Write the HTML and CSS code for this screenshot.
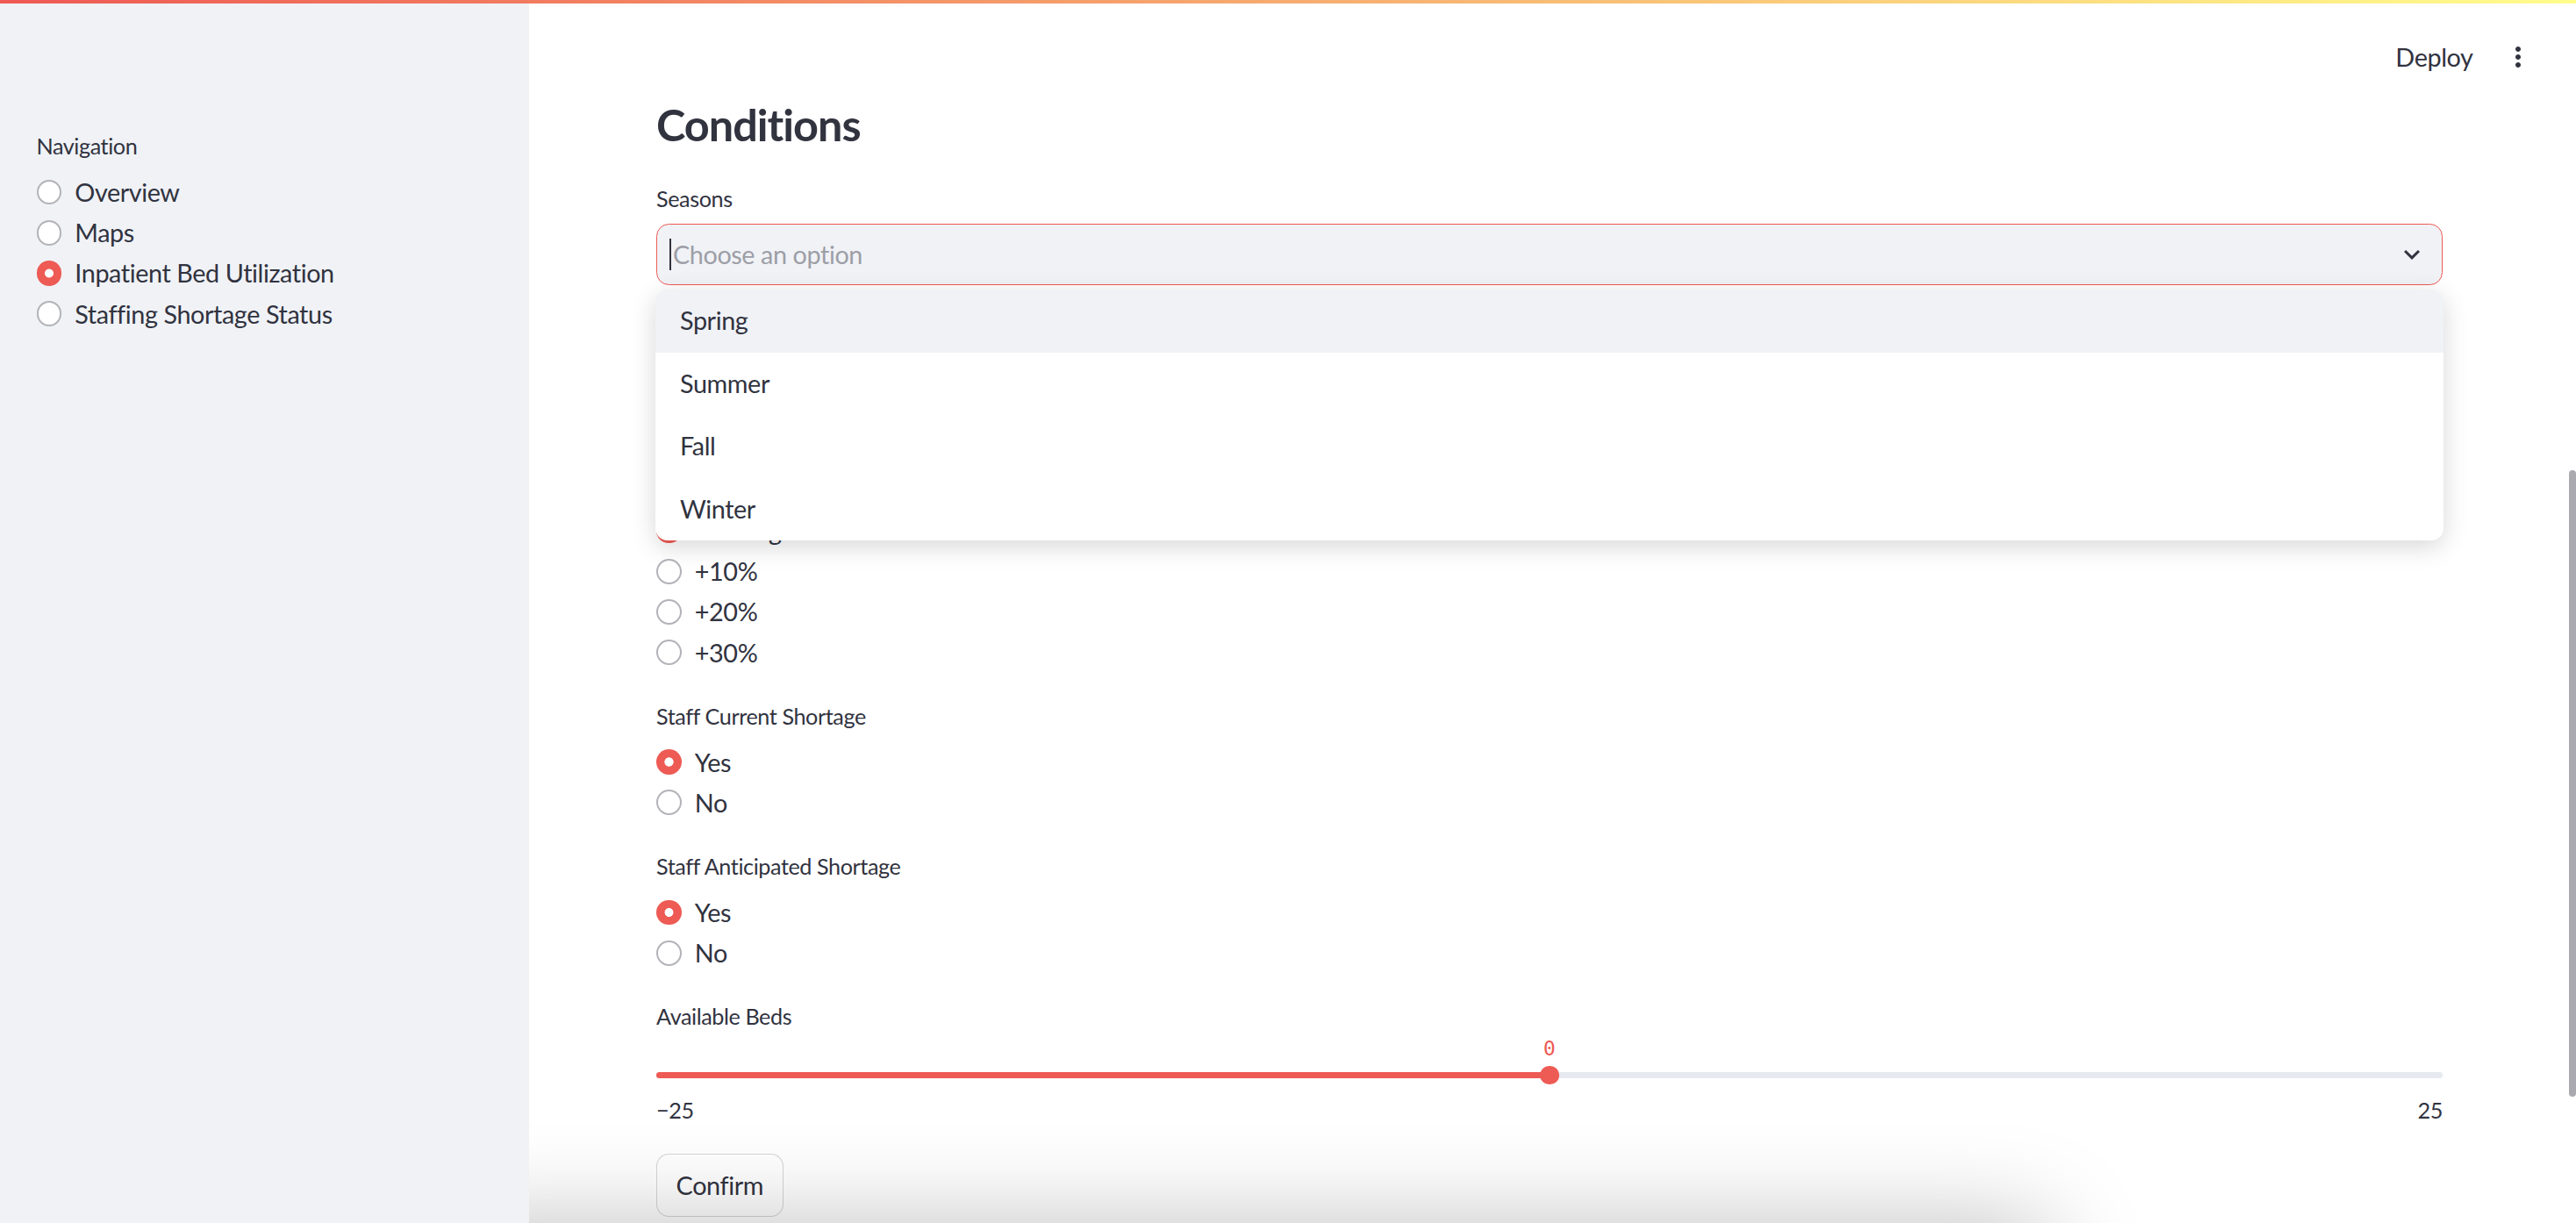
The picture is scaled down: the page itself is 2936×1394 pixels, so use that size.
FILE: index.html
```html
<!DOCTYPE html>
<html lang="en">
<head>
<meta charset="utf-8">
<title>Inpatient Bed Utilization</title>
<link rel="stylesheet" href="styles.css">
</head>
<body>
<div class="decoration"></div>
<div class="app">
  <aside class="sidebar">
    <div class="widget">
      <div class="widget-label">Navigation</div>
      <div class="radio-group">
        <div class="radio-option"><span class="radio"></span><span>Overview</span></div>
        <div class="radio-option"><span class="radio"></span><span>Maps</span></div>
        <div class="radio-option"><span class="radio checked"></span><span>Inpatient Bed Utilization</span></div>
        <div class="radio-option"><span class="radio"></span><span>Staffing Shortage Status</span></div>
      </div>
    </div>
  </aside>

  <main class="main">
    <header class="toolbar">
      <button class="deploy">Deploy</button>
      <button class="menu-btn" aria-label="Main menu">
        <svg viewBox="0 0 24 24" width="36" height="36"><path fill="#31333f" d="M12 8c1.1 0 2-.9 2-2s-.9-2-2-2-2 .9-2 2 .9 2 2 2zm0 2c-1.1 0-2 .9-2 2s.9 2 2 2 2-.9 2-2-.9-2-2-2zm0 6c-1.1 0-2 .9-2 2s.9 2 2 2 2-.9 2-2-.9-2-2-2z"/></svg>
      </button>
    </header>

    <section class="block">
      <h3 class="subheader">Conditions</h3>

      <div class="widget">
        <div class="widget-label select-label">Seasons</div>
        <div class="select">
          <span class="caret"></span>
          <span class="placeholder">Choose an option</span>
          <svg class="chevron" viewBox="0 0 24 24" width="36" height="36"><path fill="#31333f" d="M16.59 8.59 12 13.17 7.41 8.59 6 10l6 6 6-6z"/></svg>
          <ul class="dropdown">
            <li class="active">Spring</li>
            <li>Summer</li>
            <li>Fall</li>
            <li>Winter</li>
          </ul>
        </div>
      </div>

      <div class="spacer"></div>

      <div class="widget">
        <div class="widget-label">Patient Surge</div>
        <div class="radio-group">
          <div class="radio-option"><span class="radio checked"></span><span>No Surge</span></div>
          <div class="radio-option"><span class="radio"></span><span>+10%</span></div>
          <div class="radio-option"><span class="radio"></span><span>+20%</span></div>
          <div class="radio-option"><span class="radio"></span><span>+30%</span></div>
        </div>
      </div>

      <div class="widget">
        <div class="widget-label">Staff Current Shortage</div>
        <div class="radio-group">
          <div class="radio-option"><span class="radio checked"></span><span>Yes</span></div>
          <div class="radio-option"><span class="radio"></span><span>No</span></div>
        </div>
      </div>

      <div class="widget">
        <div class="widget-label">Staff Anticipated Shortage</div>
        <div class="radio-group">
          <div class="radio-option"><span class="radio checked"></span><span>Yes</span></div>
          <div class="radio-option"><span class="radio"></span><span>No</span></div>
        </div>
      </div>

      <div class="widget slider">
        <div class="widget-label">Available Beds</div>
        <div class="slider-body">
          <div class="slider-track"><div class="slider-fill" style="width:50%"></div></div>
          <div class="slider-thumb" style="left:50%"><span class="slider-value">0</span></div>
        </div>
        <div class="ticks"><span>−25</span><span>25</span></div>
      </div>

      <button class="btn">Confirm</button>
    </section>

    <div class="bottom-shadow"></div>
    <div class="scrollbar"></div>
  </main>
</div>
</body>
</html>
```

FILE: styles.css
```css
* { box-sizing: border-box; }

html, body {
  margin: 0;
  height: 100%;
}

body {
  font-family: Lato, "Noto Sans", sans-serif;
  color: #31333f;
  background: #ffffff;
  overflow: hidden;
  letter-spacing: -0.026em;
  position: relative;
}

.decoration {
  position: absolute;
  top: 0;
  left: 0;
  right: 0;
  height: 4px;
  background: linear-gradient(90deg, #ee5a54, #fffd8c);
  z-index: 20;
}

.app {
  display: flex;
  height: 1394px;
}

/* Sidebar */
.sidebar {
  width: 603px;
  flex: none;
  background: #f0f2f6;
  padding: 148px 42px 0 41.5px;
  position: relative;
  z-index: 2;
}

.widget-label {
  height: 37px;
  line-height: 37px;
  font-size: 25.2px;
  white-space: nowrap;
}

.radio-group {
  margin-top: 11px;
  display: flex;
  flex-direction: column;
}

.radio-option {
  height: 46.2px;
  display: flex;
  align-items: center;
  gap: 15px;
  font-size: 28.8px;
  white-space: nowrap;
}

.radio {
  width: 28.8px;
  height: 28.8px;
  flex: none;
  border-radius: 50%;
  border: 2px solid #b3b3b9;
  background: #ffffff;
}

.radio.checked {
  border: none;
  background: radial-gradient(circle closest-side, #ffffff 33%, #ee5a54 38%);
}

/* Main */
.main {
  flex: 1;
  position: relative;
  overflow: hidden;
  background: #ffffff;
}

.toolbar {
  height: 108px;
  display: flex;
  justify-content: flex-end;
  align-items: center;
  gap: 5px;
  padding: 22px 41px 0 0;
}

.deploy {
  background: none;
  border: none;
  height: 50px;
  padding: 0 21.6px;
  font-family: inherit;
  font-size: 28.8px;
  letter-spacing: inherit;
  color: #31333f;
}

.menu-btn {
  width: 50px;
  height: 50px;
  padding: 0;
  border: none;
  background: none;
  display: flex;
  align-items: center;
  justify-content: center;
}

.block {
  display: flex;
  flex-direction: column;
  gap: 31px;
  padding: 4px 152px 0 145px;
}

.subheader {
  margin: 0;
  padding-bottom: 4px;
  font-size: 50.4px;
  line-height: 60.5px;
  font-weight: 700;
  letter-spacing: -0.02em;
}

.select-label {
  margin-bottom: 10.5px;
}

.select {
  position: relative;
  height: 70px;
  background: #f0f2f6;
  border: 1.8px solid #ee5a54;
  border-radius: 14.4px;
  display: flex;
  align-items: center;
  padding-left: 14px;
}

.caret {
  width: 2px;
  height: 36px;
  background: #31333f;
  flex: none;
}

.placeholder {
  flex: 1;
  margin-left: 2px;
  font-size: 28.8px;
  color: #9d9ea6;
}

.chevron {
  flex: none;
  margin-right: 16px;
}

.dropdown {
  position: absolute;
  top: calc(100% + 6px);
  left: -2px;
  right: -2px;
  margin: 0;
  padding: 0;
  list-style: none;
  background: #ffffff;
  border-radius: 14px;
  box-shadow: 0 7px 29px rgba(0, 0, 0, 0.16);
  overflow: hidden;
  z-index: 5;
}

.dropdown li {
  height: 71.5px;
  line-height: 71.5px;
  padding-left: 28px;
  font-size: 28.8px;
}

.dropdown li.active {
  background: #f0f2f6;
}

.spacer {
  height: 146.85px;
}

/* Slider */
.slider-body {
  position: relative;
  height: 60px;
  padding-top: 44.4px;
}

.slider-track {
  height: 7.2px;
  border-radius: 4px;
  background: #e6e9ef;
  overflow: hidden;
}

.slider-fill {
  height: 100%;
  background: #ee5a54;
}

.slider-thumb {
  position: absolute;
  top: 37.2px;
  width: 21.6px;
  height: 21.6px;
  border-radius: 50%;
  background: #ee5a54;
  transform: translateX(-50%);
}

.slider-value {
  position: absolute;
  bottom: calc(100% + 7px);
  left: 50%;
  transform: translateX(-50%);
  font-family: "DejaVu Sans Mono", "Liberation Mono", monospace;
  font-size: 23px;
  line-height: 25px;
  color: #ee5a54;
  letter-spacing: 0;
}

.ticks {
  margin-top: 10px;
  height: 37px;
  line-height: 37px;
  display: flex;
  justify-content: space-between;
  font-size: 25.2px;
}

.btn {
  align-self: flex-start;
  height: 72px;
  padding: 0 21.6px;
  border: 1.8px solid rgba(49, 51, 63, 0.2);
  border-radius: 14.4px;
  background: #ffffff;
  font-family: inherit;
  font-size: 28.8px;
  letter-spacing: inherit;
  color: #31333f;
}

.bottom-shadow {
  position: absolute;
  left: -100px;
  width: 1830px;
  top: 100%;
  height: 300px;
  box-shadow: 0 0 110px rgba(0, 0, 0, 0.25);
  pointer-events: none;
  z-index: 3;
}

.scrollbar {
  position: absolute;
  right: 0;
  top: 536px;
  width: 8px;
  height: 714px;
  border-radius: 4px;
  background: #a9a9af;
  z-index: 4;
}
```
